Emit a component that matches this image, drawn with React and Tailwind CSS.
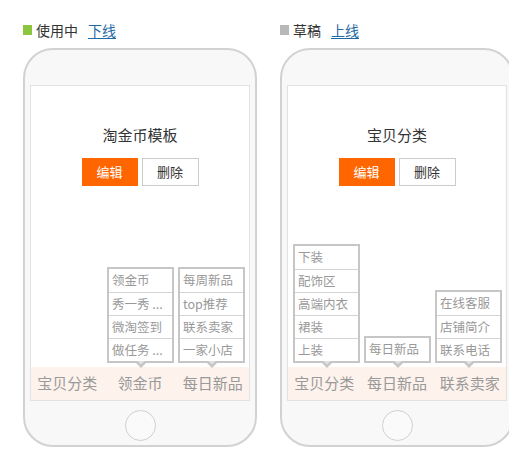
const FONT = { fontFamily: '"Noto Sans CJK SC", "Noto Sans", sans-serif' }

const PHONES = [
  {
    status: '使用中',
    dot: 'bg-[#8cc63f]',
    action: '下线',
    title: '淘金币模板',
    tabs: ['宝贝分类', '领金币', '每日新品'],
    menus: [[], ['领金币', '秀一秀 ...', '微淘签到', '做任务 ...'], ['每周新品', 'top推荐', '联系卖家', '一家小店']],
  },
  {
    status: '草稿',
    dot: 'bg-[#b8b8b8]',
    action: '上线',
    title: '宝贝分类',
    tabs: ['宝贝分类', '每日新品', '联系卖家'],
    menus: [['下装', '配饰区', '高端内衣', '裙装', '上装'], ['每日新品'], ['在线客服', '店铺简介', '联系电话']],
  },
]

function Menu({ items }) {
  if (!items.length) return <div className="w-[67px]" />
  return (
    <div className="relative w-[67px] border-2 border-[#c6c6c6] bg-white">
      {items.map((t, i) => (
        <div key={i}
          className={`h-[23px] px-[3px] flex items-center text-[12.5px] text-[#999] whitespace-nowrap overflow-hidden ${i > 0 ? 'border-t border-[#d4d4d4]' : ''}`}>
          {t}
        </div>
      ))}
      <svg className="absolute left-1/2 -translate-x-1/2 top-full" width="14" height="8" viewBox="0 0 14 8">
        <polygon points="0,0 14,0 7,7" fill="#c6c6c6" />
        <polygon points="3.5,0 10.5,0 7,3.5" fill="#e2e2e2" />
      </svg>
    </div>
  )
}

function Phone({ p }) {
  return (
    <div className="w-[234px] flex flex-col flex-shrink-0">
      {/* Header */}
      <div className="flex items-center h-[18px] text-[14px] text-[#333]">
        <span className={`w-[9px] h-[10px] ${p.dot} mr-[4px]`} />
        <span>{p.status}</span>
        <a className="ml-[10px] text-[#1f6aa5] underline underline-offset-2">{p.action}</a>
      </div>

      {/* Phone body */}
      <div className="mt-[9px] w-[234px] h-[399px] border-2 border-[#d2d2d2] rounded-[30px] bg-[#f8f8f8] px-[5px] pt-[35px] flex flex-col items-center">
        <div className="w-[220px] h-[316px] border border-[#e2e2e2] bg-white flex flex-col">
          <div className="pt-[39px] text-center text-[15px] leading-[20px] text-[#333]">{p.title}</div>
          <div className="mt-[13px] flex justify-center gap-[4px]">
            <button className="w-[56px] h-[28px] bg-[#ff6600] text-white text-[13px]">编辑</button>
            <button className="w-[57px] h-[28px] border border-[#cccccc] bg-white text-[#333] text-[13px]">删除</button>
          </div>

          <div className="flex-1" />

          {/* Sub menus */}
          <div className="flex items-end pl-[5px] gap-[4px]">
            {p.menus.map((m, i) => <Menu key={i} items={m} />)}
          </div>

          {/* Tab bar */}
          <div className="mt-[4px] h-[33px] bg-[#fdf2ec] flex items-center">
            {p.tabs.map(t => (
              <div key={t} className="flex-1 text-center text-[15px] text-[#999]">{t}</div>
            ))}
          </div>
        </div>

        <div className="mt-[9px] w-[31px] h-[31px] rounded-full border border-[#d0d0d0] bg-[#fafafa]" />
      </div>
    </div>
  )
}

export default function App() {
  return (
    <div className="w-[509px] h-[463px] overflow-hidden bg-white flex gap-[23px] pl-[23px] pt-[21px]" style={FONT}>
      {PHONES.map((p, i) => <Phone key={i} p={p} />)}
    </div>
  )
}
